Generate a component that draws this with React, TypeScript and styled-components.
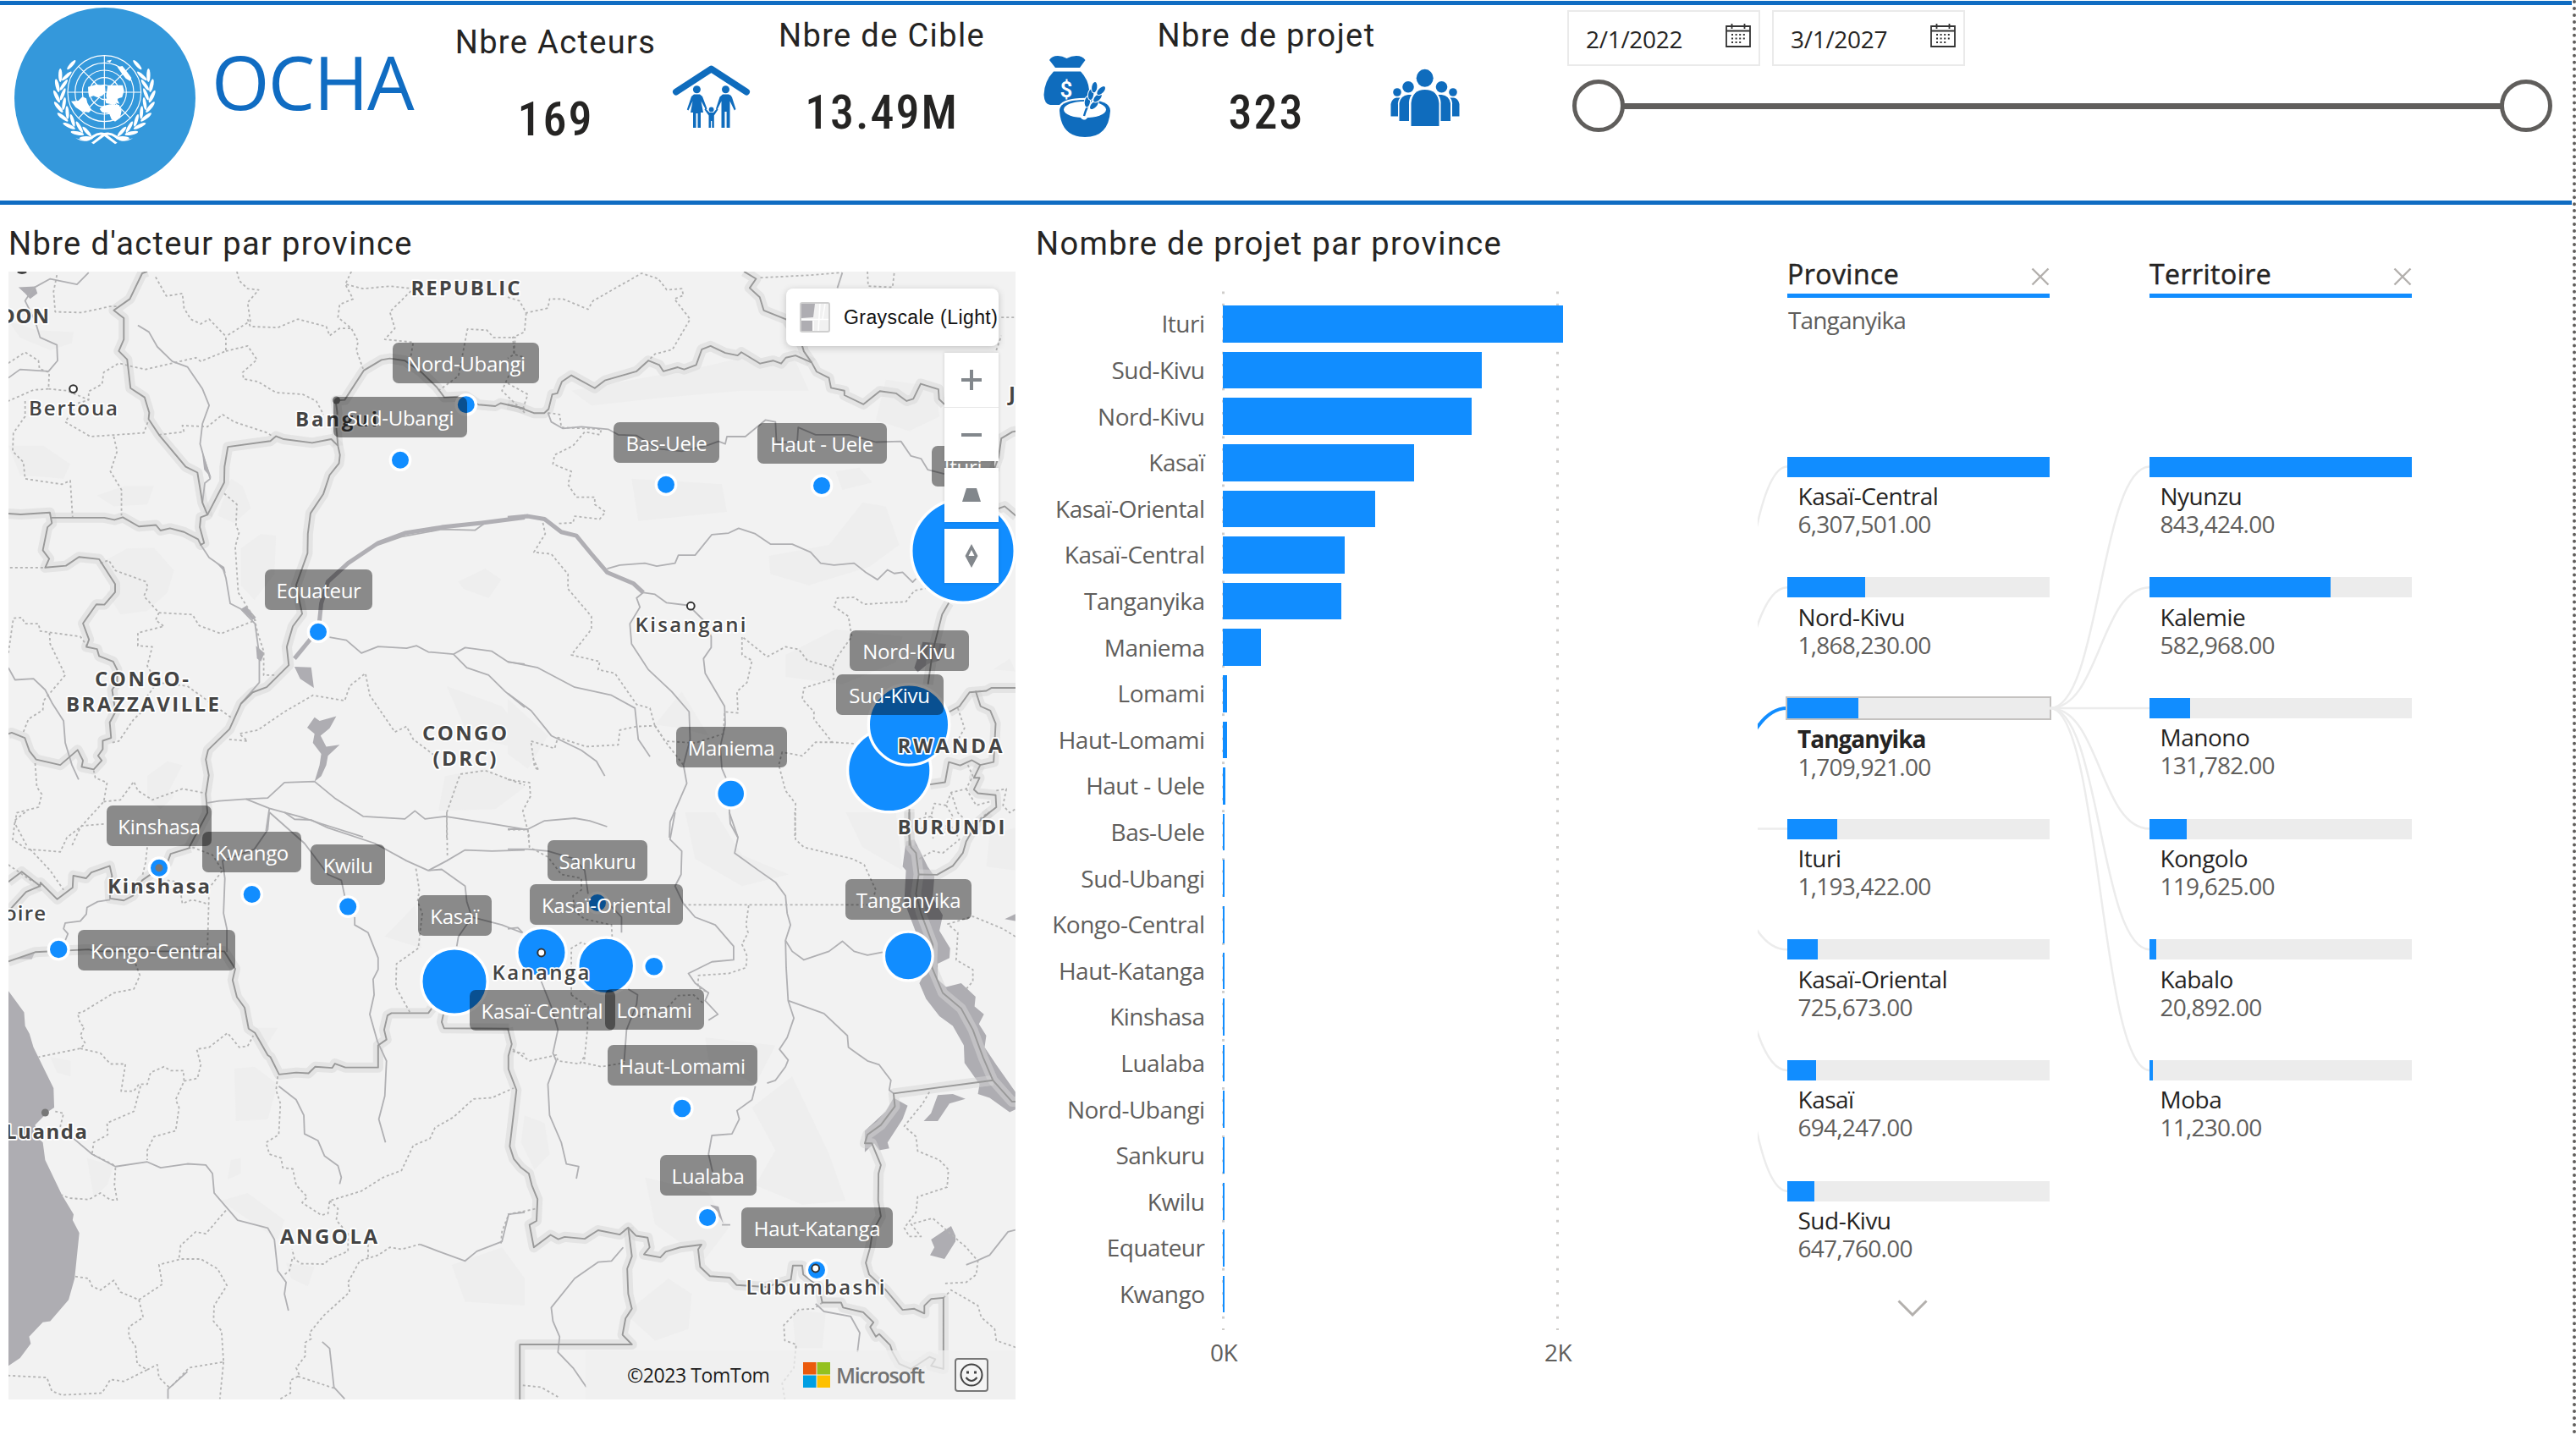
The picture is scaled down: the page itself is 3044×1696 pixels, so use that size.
import React from "react";
import styled, { createGlobalStyle, css } from "styled-components";

const BLUE = "#118dff";
const BRAND = "#0f6cbd";
const INK = "#252423";
const MUTED = "#605e5c";
const SEGOE = `"Open Sans", "Noto Sans", sans-serif`;
const DIN = `Roboto, "Open Sans", sans-serif`;

const GlobalStyle = createGlobalStyle`
  html, body { margin: 0; padding: 0; background: #fff; }
  * { box-sizing: border-box; }
`;

const Page = styled.div`
  display: flex;
  width: 3044px;
  height: 1696px;
  overflow: hidden;
  background: #fff;
  color: ${INK};
  font-family: ${SEGOE};
`;

const Report = styled.div`
  display: flex;
  flex: none;
  flex-direction: column;
  width: 3040px;
`;

const PageGuide = styled.div`
  flex: none;
  width: 4px;
  height: 1696px;
  border-left: 4px dotted ${MUTED};
`;

/* ---------- header ---------- */

const Header = styled.header`
  display: flex;
  align-items: flex-start;
  width: 3039px;
  height: 241px;
  margin-top: 1px;
  border-top: 5px solid #106cc2;
  border-bottom: 5px solid #106cc2;
`;

const Brand = styled.div`
  display: flex;
  align-items: flex-start;
  width: 520px;
  padding: 3px 0 0 17px;
`;

const Logo = styled.svg`
  display: block;
  width: 214px;
  height: 214px;
`;

const BrandName = styled.h1`
  margin: 43px 0 0 19px;
  color: #106cc2;
  font-size: 88px;
  font-weight: 400;
  letter-spacing: -1.6px;
  line-height: 88px;
`;

const Kpi = styled.div<{ $width: number; $top: number; $left?: number }>`
  display: flex;
  flex-direction: column;
  align-items: center;
  width: ${(p) => p.$width}px;
  margin-left: ${(p) => p.$left ?? 0}px;
  padding: ${(p) => p.$top}px 0 0 2px;
  font-family: ${DIN};
`;

const dinTitle = css`
  font-family: ${DIN};
  font-size: 38px;
  font-stretch: 88%;
  font-weight: 450;
  letter-spacing: 0.036em;
  line-height: 38px;
  white-space: nowrap;
`;

const KpiTitle = styled.div`
  ${dinTitle}
`;

const KpiValue = styled.div`
  margin-top: 44px;
  font-size: 56px;
  font-stretch: 79%;
  font-weight: 480;
  letter-spacing: 0.035em;
  line-height: 56px;
`;

const KpiIcon = styled.svg<{ $width: number; $left?: number }>`
  display: block;
  width: ${(p) => p.$width}px;
  height: 110px;
  margin: 54px 0 0 ${(p) => p.$left ?? 0}px;
`;

const Slicer = styled.div`
  display: flex;
  flex-direction: column;
  margin-left: 125px;
  padding-top: 6px;
`;

const Dates = styled.div`
  display: flex;
  gap: 14px;
`;

const DateField = styled.div`
  display: flex;
  justify-content: space-between;
  width: 228px;
  height: 66px;
  padding: 0 9px 0 20px;
  border: 2px solid #eaeaea;
  font-size: 28px;
  letter-spacing: -0.3px;
  line-height: 65px;
`;

const CalendarIcon = styled.svg`
  width: 30px;
  height: 28px;
  margin-top: 14px;
`;

const Range = styled.div`
  display: flex;
  align-items: center;
  width: 1158px;
  margin: 16px 0 0 6px;
`;

const Handle = styled.div`
  width: 62px;
  height: 62px;
  border: 5px solid ${MUTED};
  border-radius: 50%;
`;

const Track = styled.div`
  flex: 1;
  height: 7px;
  margin: 0 -1px;
  background: ${MUTED};
`;

/* ---------- body ---------- */

const Body = styled.main`
  display: flex;
  align-items: flex-start;
  height: 1454px;
`;

const MapPanel = styled.section`
  width: 1200px;
  padding: 27px 0 0 10px;
`;

const PanelTitle = styled.h2<{ $indent?: number }>`
  ${dinTitle}
  margin: 0;
  padding-left: ${(p) => p.$indent ?? 0}px;
`;

const MapCanvas = styled.div`
  position: relative;
  width: 1190px;
  height: 1333px;
  margin-top: 14px;
  overflow: hidden;
  background: #f2f2f2;
`;

const MapDrawing = styled.svg`
  display: block;
  width: 1190px;
  height: 1333px;
`;

const MapLabel = styled.div<{ $x: number; $y: number; $w: number }>`
  position: absolute;
  left: ${(p) => p.$x - 10}px;
  top: ${(p) => p.$y - 321}px;
  width: ${(p) => p.$w}px;
  height: 48px;
  border-radius: 7px;
  background: rgba(0, 0, 0, 0.43);
  color: #fff;
  font-size: 24px;
  letter-spacing: -0.3px;
  line-height: 49px;
  text-align: center;
  white-space: nowrap;
`;

const StylePicker = styled.div`
  position: absolute;
  top: 20px;
  right: 20px;
  display: flex;
  align-items: center;
  gap: 16px;
  width: 251px;
  height: 68px;
  padding-left: 16px;
  border-radius: 8px;
  background: #fff;
  box-shadow: 0 2px 8px rgba(0, 0, 0, 0.2);
  color: #111;
  font-family: "Liberation Sans", Arial, sans-serif;
  font-size: 23px;
  letter-spacing: 0.42px;
  white-space: nowrap;
`;

const StyleThumb = styled.svg`
  flex: none;
  width: 36px;
  height: 36px;
`;

const MapButtons = styled.div`
  position: absolute;
  top: 96px;
  right: 20px;
  display: flex;
  flex-direction: column;
  gap: 8px;
`;

const ButtonStack = styled.div`
  display: flex;
  flex-direction: column;
  background: #fff;
  box-shadow: 0 0 4px rgba(0, 0, 0, 0.16);
`;

const MapButton = styled.button`
  display: block;
  width: 64px;
  height: 64px;
  padding: 0;
  border: 0;
  background: none;

  & + & {
    border-top: 1px solid #e8e8e8;
  }

  svg {
    display: block;
    width: 64px;
    height: 64px;
  }
`;

const Attribution = styled.footer`
  position: absolute;
  right: 0;
  bottom: 0;
  display: flex;
  align-items: center;
  width: 508px;
  height: 58px;
  padding: 0 32px 0 49px;
  background: rgba(238, 238, 238, 0.72);
`;

const Copyright = styled.span`
  width: 208px;
  color: #1c1c1c;
  font-size: 23px;
  letter-spacing: -0.4px;
`;

const WindowsMark = styled.svg`
  width: 32px;
  height: 32px;
  margin-right: 7px;
`;

const Vendor = styled.span`
  flex: 1;
  color: #737373;
  font-size: 25px;
  font-weight: 600;
  letter-spacing: -1.2px;
  line-height: 32px;
`;

const Feedback = styled.svg`
  width: 40px;
  height: 40px;
`;

/* ---------- bar chart ---------- */

const ChartPanel = styled.section`
  width: 877px;
  padding-top: 27px;
`;

const dots = `linear-gradient(#cfcdcb 3px, transparent 3px)`;

const Plot = styled.div`
  height: 1228px;
  margin-top: 37px;
  padding-top: 11.7px;
  background: ${dots} 244px 0.5px / 3px 14.25px repeat-y, ${dots} 639px 0.5px / 3px 14.25px repeat-y;
`;

const BarRow = styled.div`
  display: grid;
  grid-template-columns: 223.5px auto;
  column-gap: 21px;
  align-items: center;
  height: 54.6px;
`;

const BarLabel = styled.div`
  color: ${MUTED};
  font-size: 28px;
  letter-spacing: -0.5px;
  line-height: 43px;
  text-align: right;
  white-space: nowrap;
`;

const Bar = styled.div`
  height: 43.6px;
  background: ${BLUE};
`;

const Axis = styled.div`
  display: flex;
  gap: 335px;
  padding: 12px 0 0 216px;
  color: ${MUTED};
  font-size: 28px;
  letter-spacing: -0.6px;
  line-height: 28px;
`;

const Tick = styled.div`
  width: 60px;
  text-align: center;
`;

/* ---------- decomposition tree ---------- */

const TreePanel = styled.section`
  display: flex;
  width: 780px;
  padding-top: 61px;
`;

const Links = styled.svg<{ $width: number }>`
  flex: none;
  width: ${(p) => p.$width}px;
  height: 1393px;
`;

const TreeColumn = styled.div`
  width: 309.5px;
`;

const TreeHead = styled.div`
  display: flex;
  align-items: center;
  justify-content: space-between;
  height: 49px;
  border-bottom: 5px solid ${BLUE};
  font-size: 32px;
  letter-spacing: 0.45px;
  line-height: 38px;
  -webkit-text-stroke: 0.5px ${INK};
`;

const TreeTitle = styled.span`
  margin-top: -2px;
`;

const CloseIcon = styled.svg`
  width: 22px;
  height: 22px;
  margin-top: 3px;
`;

const TreePath = styled.div`
  height: 187.5px;
  padding: 11px 0 0 1px;
  color: ${MUTED};
  font-size: 28px;
  letter-spacing: -0.85px;
  line-height: 30px;
`;

const Node = styled.div`
  height: 142.7px;
`;

const NodeTrack = styled.div<{ $selected?: boolean }>`
  height: 24px;
  background: #ececec;
  outline: ${(p) => (p.$selected ? "2px solid #c4c2c0" : "none")};
`;

const NodeFill = styled.div`
  height: 24px;
  background: ${BLUE};
`;

const NodeName = styled.div<{ $selected?: boolean }>`
  margin-top: ${(p) => (p.$selected ? 8 : 6.5)}px;
  padding-left: ${(p) => (p.$selected ? 12 : 12.5)}px;
  font-size: 28px;
  font-weight: ${(p) => (p.$selected ? 700 : 400)};
  letter-spacing: ${(p) => (p.$selected ? -1 : -0.5)}px;
  line-height: 33px;
`;

const NodeValue = styled.div`
  padding-left: 12.5px;
  color: ${MUTED};
  font-size: 28px;
  letter-spacing: -0.75px;
  line-height: 33px;
`;

const MoreIcon = styled.svg`
  display: block;
  width: 36px;
  height: 20px;
  margin: -2px 0 0 130px;
`;

/* ---------- data ---------- */

const projects: [string, number][] = [
  ["Ituri", 402.6], ["Sud-Kivu", 306.2], ["Nord-Kivu", 294.2], ["Kasaï", 226.6],
  ["Kasaï-Oriental", 180.6], ["Kasaï-Central", 144.6], ["Tanganyika", 140.6], ["Maniema", 45.2],
  ["Lomami", 5.6], ["Haut-Lomami", 5.6], ["Haut - Uele", 3], ["Bas-Uele", 2.7],
  ["Sud-Ubangi", 2.5], ["Kongo-Central", 2.5], ["Haut-Katanga", 2.5], ["Kinshasa", 2.5],
  ["Lualaba", 2.5], ["Nord-Ubangi", 2.5], ["Sankuru", 2.5], ["Kwilu", 2.5],
  ["Equateur", 2.5], ["Kwango", 2.5],
];

const provinces: [string, number][] = [
  ["Kasaï-Central", 6307501], ["Nord-Kivu", 1868230], ["Tanganyika", 1709921], ["Ituri", 1193422],
  ["Kasaï-Oriental", 725673], ["Kasaï", 694247], ["Sud-Kivu", 647760],
];

const territories: [string, number][] = [
  ["Nyunzu", 843424], ["Kalemie", 582968], ["Manono", 131782],
  ["Kongolo", 119625], ["Kabalo", 20892], ["Moba", 11230],
];

const bubbles: [number, number, number][] = [
  [550.8, 478.3, 10], [473, 543.7, 10], [376, 746.7, 10], [787, 572.8, 10], [971, 574, 10],
  [1138, 651, 59.5], [1050.8, 910.6, 47.5], [1074, 856.4, 46], [863.7, 938, 15.3],
  [188, 1025.7, 10], [297.7, 1057, 10], [411.2, 1071.6, 10], [537, 1160, 37.5],
  [640, 1125.7, 27.5], [706, 1067, 10], [716.2, 1141.4, 31.7], [772.8, 1142.3, 10.3],
  [1073.3, 1130, 27.2], [806, 1310, 10.3], [836, 1439, 10], [965, 1501, 10], [69.2, 1122, 10.2],
];

const labels: [string, number, number, number][] = [
  ["Nord-Ubangi", 464, 404.5, 173], ["Sud-Ubangi", 394, 469, 158], ["Equateur", 313, 672.5, 127],
  ["Bas-Uele", 725, 498.5, 125], ["Haut - Uele", 894.5, 499.5, 153], ["Ituri", 1101, 527, 74],
  ["Nord-Kivu", 1003.5, 745, 141], ["Sud-Kivu", 987.5, 797, 127], ["Maniema", 798.5, 858.5, 131],
  ["Kinshasa", 126, 952, 124], ["Kwango", 239, 983, 117], ["Kwilu", 367, 998, 88],
  ["Kasaï", 493.5, 1058, 87], ["Kongo-Central", 91.5, 1098.5, 186.5], ["Kasaï-Central", 554.5, 1170, 172],
  ["Lomami", 714.5, 1169, 117], ["Sankuru", 647, 993, 118], ["Kasaï-Oriental", 626, 1044.5, 181],
  ["Tanganyika", 999, 1038.5, 149], ["Haut-Lomami", 717.5, 1235, 177], ["Lualaba", 779.5, 1364.5, 114],
  ["Haut-Katanga", 876, 1426.5, 179],
];

/* name, left, vertical centre, width, weight */
const places: [string, number, number, number, number][] = [
  ["REPUBLIC", 487.5, 339.5, 129, 700], ["DON", 2, 373, 58, 700], ["CONGO-", 114, 802, 111, 700],
  ["BRAZZAVILLE", 80, 831.5, 181, 700], ["CONGO", 501, 866, 100, 700], ["(DRC)", 513.5, 896, 75, 700],
  ["RWANDA", 1062.5, 881, 124, 700], ["BURUNDI", 1062.5, 976.5, 127, 700], ["ANGOLA", 333, 1460.5, 115, 700],
  ["Bertoua", 36, 482, 105, 600], ["Bangui", 351, 495, 97, 700], ["Kisangani", 752.5, 738, 131, 600],
  ["Kinshasa", 129, 1047, 121, 700], ["oire", 7, 1078.5, 49, 600], ["Luanda", 8, 1337, 97, 700],
  ["Kananga", 583.5, 1148.5, 115, 600], ["Lubumbashi", 883.5, 1521, 164, 600], ["J", 1194, 465, 12, 700],
];

type Tile = {
  at: string;
  land: string[];
  water: string[];
  borders: string[];
  regions: string[];
  rivers: string[];
  wide: string[];
};

const tiles: Tile[] = [
  {
    at: "translate(0 310) scale(0.39542 0.43367)",
    land: [
      "25,160 110,185 220,190 215,220 150,240 60,205", "25,500 130,500 210,550 190,590 60,580",
      "300,820 380,780 460,778 520,840 500,900 440,950 360,960 320,900 345,880",
      "440,1400 500,1360 545,1370 505,1440 520,1455 480,1490 440,1460",
      "1335,1155 1500,1210 1568,1290 1568,1330 1400,1290", "1330,1400 1450,1380 1568,1430 1480,1490 1310,1495",
      "290,635 370,610 460,610 440,660 340,665", "1370,870 1450,835 1498,865 1460,915 1385,890",
      "720,780 780,740 825,745 820,850 760,920 720,880", "690,590 725,610 750,670 700,710 650,690 670,640",
    ],
    water: [
      "55,68 105,66 112,85 90,100 75,85", "880,1102 930,1104 938,1160 897,1135",
      "918,1268 940,1240 955,1250 1005,1237 985,1270 958,1290 975,1320 1015,1315 980,1345 975,1370 960,1400 940,1415 955,1370 960,1340 935,1310 940,1285",
      "645,818 670,830 675,848", "765,1045 790,1065 780,1088 768,1080", "603,510 614,540 632,588 610,565",
      "720,945 735,937 765,968 755,975",
    ],
    borders: [
      "440,25 425,30 388,100 340,131 370,152 370,210 355,242 380,265 390,343 432,368 446,410 444,427 475,470 555,557 590,573 605,655 620,688 600,695 597,722 610,765 600,770 592,755 550,735 508,725 480,731 466,716 415,720 367,695 342,702 312,696 152,696",
      "25,685 62,687 149,682 155,711 142,722 128,785 147,808 135,832 197,827 236,803 296,809 344,877 344,899 312,933 288,932 248,984 266,1028 258,1048 290,1054 296,1073 338,1088 350,1110 350,1145 335,1165 345,1225 328,1254 332,1296 307,1304 307,1327 293,1345 304,1358 280,1382 244,1375 248,1358 232,1329 180,1370 108,1355 88,1332 74,1296 35,1282 25,1285",
      "620,688 670,600 671,557 681,503 808,487 825,474 848,482 933,492 990,482 1010,500 1016,525 1013,548 985,580 966,632 928,684 920,740 919,793 885,880 903,958 875,992 857,1048 863,1098 797,1158 755,1172 720,1203 686,1272 622,1329 615,1355 624,1398 615,1450 620,1500 565,1595",
      "1010,500 1005,450 1008,410 1003,377 1030,375 1087,295 1140,266 1165,262 1210,268 1260,300 1305,340 1328,368 1393,365 1430,388 1480,392 1496,384 1568,399",
    ],
    regions: [
      "170,35 160,80 165,135 245,137 330,120 355,120", "465,40 497,92 545,85 550,125 570,155 600,168 625,155 675,202 675,242 600,270 585,260 435,292 385,282 355,275 310,300 305,332 265,352 265,375 230,385 195,435 270,475 430,465 443,432",
      "708,25 715,50 740,72 773,75 740,110 748,160 675,202", "740,155 748,175 830,178 890,155 975,175 985,200 1015,180 1050,180",
      "1050,25 1032,60 1055,100 1015,115 1010,150 1050,180 1070,215 1065,240 1085,290",
      "675,242 740,228 768,265 725,300 728,318 770,325 825,355 905,360 945,378 967,415",
      "475,470 550,462 545,445 620,448 665,415 700,435 800,465 815,475", "1035,60 1085,72 1165,65 1235,72 1165,135 1180,180 1150,210 1235,218 1225,270",
      "1310,350 1370,310 1397,182 1455,185 1475,205 1540,205 1535,250 1568,260", "25,275 75,245 115,268 118,290 147,300 145,345 100,348 25,378",
      "145,345 200,350 265,375", "75,378 75,420 40,465 38,515 70,545 75,590 185,605 210,595 217,695", "340,475 350,515 330,570 363,620 363,690",
      "670,630 708,660 705,720 715,735 703,775 712,900 760,970 770,1010 788,1060 788,1125 820,1125", "30,832 135,832",
      "300,820 325,812 345,840 435,870 442,885 430,910 475,955 575,960 595,990 660,1012 765,975", "475,955 465,975 490,992 412,1010 412,1045 455,1048 440,1100 470,1145 560,1155 690,1240",
      "470,1145 430,1195 430,1220 400,1245 355,1305 330,1310", "25,1065 40,970 65,968 75,985 115,985 120,1005 240,1020 260,1045",
      "148,1010 150,1040 195,1125 130,1195 128,1220 85,1245 70,1280", "685,1300 740,1305 715,1285 770,1275 850,1225 935,1180 1030,1195 1045,1155 1092,1120 1105,1180 1180,1280 1215,1265 1235,1300 1300,1345",
      "105,1365 110,1430 125,1450 115,1485 50,1500 45,1530 80,1590", "280,1385 285,1405 320,1418 310,1470 240,1540 215,1590",
      "310,1470 360,1465 400,1415 412,1440 455,1465 545,1435 615,1447", "1335,1568 1335,1500 1375,1395 1450,1385 1568,1425", "1568,410 1500,350 1520,310 1568,290",
    ],
    rivers: [
      "412,172 445,190 470,230 515,270 560,285 605,345 625,390 605,440 598,495 612,540 628,590 612,602 605,655",
      "600,770 625,805 665,830 675,860 688,930 720,945 762,985 775,1070 775,1145 720,1203",
      "620,1473 655,1468 735,1463 800,1460 850,1418 940,1415 1000,1460 1085,1510 1210,1517 1240,1495 1270,1517 1330,1510 1470,1530 1568,1545",
      "985,1022 1035,1030 1080,1065 1130,1047 1215,1052 1245,1045 1280,1062 1355,1068 1390,1050 1470,1060 1520,1090 1568,1095",
      "1355,1068 1395,1105 1460,1125 1510,1170 1568,1213", "735,1463 805,1488 900,1512 960,1530 1085,1566", "805,1488 795,1550",
      "25,315 60,292 145,297 172,268 170,225 120,205 105,160 75,105 100,70 150,45 230,60 265,28",
      "25,1105 45,1138 100,1135 135,1165 155,1200 190,1250 195,1310 215,1370 235,1410", "1100,780 1200,748 1320,728 1420,730 1450,710",
    ],
    wide: ["1568,695 1440,710 1320,722 1210,738 1130,765 1040,820 980,870 960,930 952,1000 880,1080"],
  },
  {
    at: "translate(600 310) scale(0.39542 0.43367)",
    land: [
      "190,350 560,290 700,260 860,270 900,350 700,350 450,370 250,390", "370,590 640,605 655,680 390,705",
      "780,800 960,770 1060,655 1130,665 1170,770 1080,830 900,880 785,850", "830,1070 980,1000 1180,1020 1160,1090 1000,1150 830,1130",
      "0,1190 120,1290 60,1380 0,1340", "440,1260 520,1170 600,1290 520,1270", "1100,430 1130,320 1280,340 1290,420 1200,460",
      "980,570 1050,560 1090,600 1000,620", "1450,1110 1500,1080 1517,1115",
    ],
    water: ["1215,1105 1240,1035 1310,1040 1290,1085 1255,1095 1225,1117"],
    borders: [
      "0,388 30,394 78,411 109,411 122,400 133,360 148,357 162,325 190,308 260,343 290,322 385,297 420,268 453,280 465,297 508,286 527,292 563,280 580,237 606,228 650,247 687,254 698,245 754,276 793,268 817,276 831,260 860,254 908,273 923,298 960,315 966,342 1006,350 1006,362 1063,387 1112,351 1160,357 1192,378 1212,372 1234,331 1287,346 1289,373 1305,387",
      "706,25 742,45 723,70 753,95 765,131 833,156 880,228 885,243 908,273", "1440,600 1467,530 1475,480 1508,462 1520,460", "1440,680 1485,665 1520,692",
      "1318,928 1298,960 1270,1060 1256,1150", "1320,1225 1350,1210 1380,1172 1430,1168 1445,1160 1520,1160",
      "1398,1168 1413,1210 1442,1222 1458,1257 1452,1362 1412,1370 1387,1357 1352,1371 1318,1362 1307,1417 1262,1423",
      "1412,1370 1393,1405 1410,1405 1393,1437 1405,1447 1458,1452 1460,1485 1425,1510", "1200,1490 1200,1590",
    ],
    regions: [
      "0,95 35,105 55,138 120,125 125,100 165,100 240,128 255,105 400,30 450,45 475,75 520,72 525,90 498,100 545,155 492,238 440,250 420,268",
      "55,138 50,190 15,205 20,250 0,262", "0,330 60,360 45,400", "755,42 905,35 998,28", "1075,25 1077,65 1150,68 1155,28", "1475,150 1520,150", "1460,240 1475,200",
      "120,410 155,415 160,450 280,455 275,470 230,462 195,500 140,525 135,550 190,570 180,605 205,640 260,640 260,660 292,680 275,700 200,692 195,710 150,712",
      "105,710 112,740 78,790 130,795 180,850 180,890 250,965 250,1000 190,1070 275,1088 270,1110 320,1120 385,1205 425,1215 440,1265",
      "0,1410 65,1418 68,1455 45,1495 65,1568", "70,1310 80,1375 92,1385 75,1350", "70,1305 140,1325 150,1295 235,1320 330,1315 335,1275 385,1265 440,1263",
      "440,1263 470,1305 560,1310 645,1285 648,1225 688,1228 685,1170 715,1145 730,1085 700,1070 700,1020 775,1075 830,1048 870,1055 895,1085 970,1105 985,1075 1028,1020 1018,965 975,938 985,915 1035,913 1065,932 1190,925 1215,895 1250,888",
      "440,1263 470,1305 525,1370", "970,1105 975,1135 885,1160 880,1190 915,1225 915,1245 970,1308 1040,1312", "970,1308 920,1308 880,1345 820,1335 810,1370 830,1440 860,1475 858,1568",
      "1345,1215 1365,1270 1340,1310", "1375,1370 1390,1400 1370,1435 1325,1445 1310,1480 1275,1475 1265,1510 1215,1520", "1325,1445 1345,1500 1385,1535 1435,1500",
      "1460,1440 1490,1435 1480,1480 1500,1500 1517,1490", "1310,1480 1330,1510 1300,1560", "1265,1510 1290,1540 1270,1570", "1370,1435 1400,1480 1440,1470",
    ],
    rivers: [
      "405,900 440,905 475,928 540,935 590,980 608,1020 608,1050 585,1080 590,1120 648,1210 650,1260 635,1320 640,1380 652,1405",
      "297,835 335,825 410,820 445,828 500,820 510,798 560,798 610,742 660,738 690,725 740,740 785,768 850,768 905,790 935,820 975,825 1035,820 1070,845 1105,865 1135,838 1155,848 1180,845 1210,872 1220,862",
      "405,900 385,915 395,940 365,985 370,1040 420,1110 490,1170 542,1225 545,1300 525,1370 535,1420 485,1525 483,1568", "662,1490 665,1530 688,1568",
      "120,410 130,435 165,453 220,448 300,455 330,470 385,472 450,508 520,515 600,498 630,488 650,495 655,475 710,475 770,430 800,435 803,490 865,490 868,450 920,470 1020,470 1100,490 1175,488 1205,528 1235,535 1255,565 1305,577",
      "0,1088 90,1105 200,1158 310,1180 380,1215 390,1300 425,1347", "0,1175 70,1222 130,1290 220,1330 265,1360 290,1400", "0,1545 60,1545 110,1522 200,1515 245,1522 297,1538", "1000,28 985,70",
    ],
    wide: ["0,697 60,692 110,700 160,735 205,745 250,795 297,845 375,875 405,900"],
  },
  {
    at: "translate(0 960) scale(0.39542 0.45914)",
    land: [
      "700,660 760,655 830,700 800,790 705,795", "1350,1165 1500,1120 1568,1200 1568,1270 1390,1260", "260,890 340,910 320,960 280,990",
      "660,1000 740,980 850,1050 830,1100", "1150,320 1240,240 1260,350", "855,1160 940,1170 920,1220 870,1200", "760,555 830,555 790,610", "690,895 720,890 720,930 680,945", "150,630 210,640 210,680 170,670",
    ],
    water: [
      "25,460 72,515 75,550 88,570 100,605 160,710 162,760 145,770 105,805 110,835 128,850 135,895 185,985 220,1035 217,1050 237,1083 223,1200 205,1255 150,1310 128,1313 87,1350 92,1368 60,1405 25,1425",
      "50,378 105,360 95,378",
    ],
    borders: [
      "569,91 510,107 500,130 425,175 397,215 370,227 329,222 327,180 335,165 328,138 273,155 257,170 219,163 217,194 171,224 121,181 120,190 65,153 25,179", "120,190 78,205 25,255",
      "25,384 105,360 265,353 290,358 670,358 703,403 695,432 708,476 731,503 743,557 762,568 800,625 808,630 834,675 885,670 922,672 942,655 993,658 1001,647 1032,657 1130,657 1130,600 1155,585 1148,560 1158,523 1170,517 1280,517 1290,505",
      "1325,520 1320,540 1327,556 1521,557",
    ],
    regions: [
      "75,0 45,20 38,70 80,95 180,102 200,65 245,35 310,30", "440,90 435,130 425,165", "25,135 100,180", "90,95 150,150 190,200",
      "575,90 635,110 665,150 625,195 620,350", "500,175 535,180 545,235 575,225 625,237", "405,390 418,420 400,455 340,465 245,515 232,517 240,545 252,552 240,575 255,595 240,608 115,630",
      "240,608 300,620 330,648 375,648 362,718 400,718 415,700 440,700 450,670 490,655 510,665 548,665 550,692 525,740 535,760 525,820 460,835 440,870 440,895",
      "420,705 400,770 320,800 322,830 280,850 275,880 345,910", "550,692 590,685 600,650 588,610 625,605 680,568 715,605 740,602 757,575",
      "830,680 825,715 838,750 833,830 795,850 805,880 840,890 845,915 875,918 885,960 918,990 903,1005 960,1037 980,1033 985,1000 1080,975 1145,940 1200,922 1235,858 1285,840 1300,812 1355,785 1415,738 1470,735 1535,710",
      "985,1000 1010,1020 1005,1050 1040,1085 1040,1130 985,1150 968,1163 900,1162 880,1150 873,1125", "873,1150 865,1180 850,1190", "345,915 342,960 350,998 330,998 300,980 265,997 205,993 185,985",
      "675,1025 615,1085 585,1080 540,1115 535,1148", "225,1195 265,1200 275,1220 300,1230 340,1205 360,1235 415,1255 485,1215 475,1165 540,1150 600,1150 650,1175 678,1218 640,1270 638,1310 662,1335 668,1415 565,1430 510,1480",
      "415,1255 428,1300 385,1325 385,1350 405,1375 410,1420 440,1435 370,1465 330,1460 305,1495 185,1500 155,1490 140,1455 25,1450", "440,1435 470,1422 475,1455 505,1480", "668,1415 657,1510",
      "838,1510 868,1495 868,1462 895,1450 885,1430 912,1400 912,1365 930,1355 925,1340 968,1295 1045,1235 1040,1210 1075,1155 1130,1140 1165,1120 1200,1125 1255,1112", "890,1452 1000,1483", "1100,1145 1100,1110",
      "1497,1110 1500,1080 1520,1035 1568,1028", "1243,145 1253,200 1248,230 1262,260 1250,350 1185,390 1183,450 1225,515", "165,770 190,775 180,810", "1335,0 1337,115", "1532,615 1568,622",
    ],
    rivers: [
      "329,225 292,230 260,245 258,262 240,280 195,285 190,300 203,313 195,330", "220,840 275,880 345,912 440,900 480,915 560,905 615,908 635,930 640,980 710,1050 800,1070 820,1100 830,1180 855,1210 850,1240 862,1283",
      "805,0 800,45 760,95 665,125 672,170 668,260 678,300 678,360", "833,705 885,740 908,780 910,828 950,845 970,885 1010,910 1020,940 1015,957", "805,0 910,80 980,160 1020,175 1030,215",
      "1060,270 1060,290 1100,310 1130,375 1130,405 1115,430 1118,470 1105,520 1128,590 1155,640 1150,730 1132,790 1152,850",
      "1280,150 1335,125 1390,97 1470,100 1568,97", "1280,150 1320,147 1390,190 1395,230 1410,270 1370,320 1365,345",
      "1410,270 1500,290 1530,300 1560,310", "1255,1112 1310,1130 1390,1155 1425,1130 1500,1105 1520,1035 1568,1030", "963,1363 985,1380 998,1480 1030,1510", "502,1510 502,1485 560,1440",
      "850,0 880,18 930,20 980,40 1120,80 1215,125 1280,150",
    ],
    wide: [],
  },
  {
    at: "translate(600 960) scale(0.39542 0.45914)",
    land: [
      "850,680 960,880 1010,1000 880,1010 740,960 800,870 730,760", "410,940 600,980 660,1070 590,1150 520,1110 440,1060", "850,1280 950,1290 940,1380 860,1380",
      "530,0 620,0 700,110 840,160 700,190 560,120", "1010,0 1160,0 1180,150 1060,90", "590,580 800,600 740,700 600,640", "50,780 110,800 125,880 80,920 40,850", "1440,60 1517,40 1517,150 1430,140", "350,1290 480,1200 550,1240 540,1330 440,1360",
    ],
    water: [
      "1190,75 1215,70 1255,140 1275,165 1270,220 1300,265 1290,305 1322,350 1320,375 1285,390 1285,430 1310,450 1355,440 1398,475 1395,500 1423,520 1408,545 1430,575 1425,605 1460,650 1517,720 1517,765 1500,772 1440,735 1405,725 1410,700 1365,645 1363,600 1330,550 1290,525 1250,480 1230,440 1262,390 1262,350 1220,310 1185,230 1190,150 1180,140",
      "1153,735 1195,755 1180,790 1135,850 1140,865 1110,870 1095,852 1067,875 1067,820 1130,770", "1285,728 1330,725 1368,738 1320,750 1285,795 1243,795 1265,775",
      "1265,1100 1325,1065 1338,1090 1338,1105 1305,1150 1262,1140 1275,1120", "605,1010 630,1015 645,1060 635,1045", "1485,275 1517,262 1517,280",
    ],
    borders: [
      "0,556 12,597 2,627 2,661 26,715 6,860 18,892 40,915 63,930 72,960 89,996 86,1052 65,1062 78,1120 128,1088 151,1099 170,1093 230,1098 270,1076 335,1087 360,1069 383,1090 418,1095 424,1120 407,1138 456,1146 472,1131 515,1120 579,1113 569,1125 575,1170 604,1194 664,1198 684,1217 770,1222 846,1203 852,1167 880,1167 883,1190 930,1222 940,1262 996,1262 1002,1275 1062,1287 1093,1313 1083,1325 1100,1350 1110,1343 1143,1372 1150,1390 1170,1420 1205,1433 1260,1402 1278,1408 1265,1425 1302,1433 1302,1250 1265,1253 1245,1270 1245,1290 1215,1278 1180,1281 1130,1230 1080,1190 1070,1160 1083,1120 1090,1080 1115,1040 1107,1000 1108,930 1115,908 1088,852 1067,852 1075,830 1115,805 1157,757 1153,724 1450,690",
      "1200,0 1200,60 1205,90 1220,105 1228,160 1220,210 1235,260 1270,340 1268,400 1300,465 1355,505 1390,560 1420,630 1450,690 1507,745 1520,745", "1228,160 1283,161 1330,138 1360,105 1370,75 1400,30 1440,0",
      "360,1069 371,1143 357,1175 360,1240 371,1278 352,1303 343,1345 371,1370 36,1370 36,1520",
    ],
    regions: [
      "0,45 60,45 65,90 120,115 160,160 220,170 220,200 195,215 200,255 230,275 310,290 312,320", "190,470 190,350 220,335 245,345", "190,470 240,500 238,560 228,645 280,655 350,645", "15,610 65,640 145,625 150,640 215,648 228,630",
      "390,525 480,500 510,472 555,470 585,492", "525,238 1085,238 1100,200 1065,135 1030,120 885,90 860,70 858,0", "720,240 712,290 718,310 700,340 715,370 712,400 660,415 570,420 568,450 600,465",
      "1517,320 1480,300 1390,268 1315,288 1345,310 1340,380 1390,405 1390,435 1365,460", "1260,720 1240,750 1185,808 1220,835 1225,872 1290,895 1317,920 1313,965 1225,990 1220,1030 1185,1070 1200,1092 1235,1092 1205,1060 1270,1045 1310,1075 1370,1120 1405,1155 1400,1190 1370,1210 1302,1213",
      "1302,1250 1325,1230 1405,1270 1415,1300 1455,1330 1460,1360 1520,1378", "0,1035 60,1025 86,1020", "940,1262 915,1278 870,1280 825,1320 828,1360 862,1370 855,1430 820,1470 828,1511",
      "1250,0 1240,40 1230,60", "1230,120 1270,100 1300,105 1350,70 1330,40 1290,30", "45,1475 100,1480 150,1505",
    ],
    rivers: [
      "500,0 485,70 520,100 518,160 500,190 525,235 560,270 620,290 675,345 675,380 610,385 540,415 560,440 600,465 590,485 628,520 600,535",
      "662,0 688,65 678,105 750,150 800,180 830,215 835,260 845,290 830,330 832,400 838,485 855,530 835,580 812,610 838,638 830,655 800,690 775,697", "740,705 730,740 685,768 692,790 670,828 610,832 600,880 612,925",
      "838,485 945,518 1015,575 1018,605 1075,640 1110,650 1145,690 1140,715 1153,724", "830,330 850,358 885,380 960,358 1000,332 1035,358 1075,368 1120,360", "0,95 60,95 120,100 200,120 230,150 240,210", "290,225 340,270 340,310",
      "100,435 130,500 150,560 135,620 145,640 120,700 125,780 160,850 175,905 212,912 205,943", "345,1120 310,1155 270,1158 200,1200 130,1275 135,1310 155,1350 150,1390 195,1430 235,1480",
      "920,1265 945,1285 1025,1298 1052,1340 1045,1390", "1517,1075 1495,1080 1440,1140 1400,1155 1370,1165", "0,300 30,297 45,310", "360,455 388,470 385,495 355,560 348,640", "640,1062 665,1062",
    ],
    wide: [],
  },
];

/* ---------- drawings ---------- */

const Lines = ({ items, ...rest }: { items: string[] } & React.SVGProps<SVGPolylineElement>) => (
  <>
    {items.map((points, i) => (
      <polyline key={i} points={points} fill="none" strokeLinejoin="round" vectorEffect="non-scaling-stroke" {...rest} />
    ))}
  </>
);

const Areas = ({ items, fill }: { items: string[]; fill: string }) => (
  <>
    {items.map((points, i) => (
      <polygon key={i} points={points} fill={fill} />
    ))}
  </>
);

const layers: ((t: Tile) => React.ReactNode)[] = [
  (t) => <Areas items={t.land} fill="#eeeeee" />,
  (t) => <Areas items={t.water} fill="#aeadb2" />,
  (t) => <Lines items={t.borders} stroke="rgba(214,214,214,0.5)" strokeWidth={12} />,
  (t) => <Lines items={t.regions} stroke="#b4b4b4" strokeWidth={1.8} strokeDasharray="3 3" />,
  (t) => <Lines items={t.rivers} stroke="#b0b0b3" strokeWidth={1.8} />,
  (t) => <Lines items={t.wide} stroke="#b0afb4" strokeWidth={5} />,
  (t) => <Lines items={t.borders} stroke="#999" strokeWidth={1.9} />,
];

const cities: [number, number][] = [[86.6, 459.6], [816.3, 716.2], [639.7, 1126], [963.7, 1499]];

const BaseMap = () => (
  <MapDrawing viewBox="10 321 1190 1333">
    {layers.map((layer, i) => (
      <g key={i}>
        {tiles.map((t) => (
          <g key={t.at} transform={t.at}>{layer(t)}</g>
        ))}
      </g>
    ))}
    <path d="M21 321q5 3 10 0" fill="none" stroke="#444" strokeWidth="3" />
    <circle cx="397.5" cy="473" r="4.5" fill="#777" />
    <circle cx="53.4" cy="1315" r="4.5" fill="#777" />
    {bubbles.map(([x, y, r]) => (
      <circle key={`${x}-${y}`} cx={x} cy={y} r={r + 1.7} fill={BLUE} stroke="#fff" strokeWidth="3.4" />
    ))}
    <circle cx="188" cy="1025.7" r="4.5" fill="#777" />
    {cities.map(([x, y]) => (
      <circle key={x} cx={x} cy={y} r="4.4" fill="#fff" stroke="#333" strokeWidth="2" />
    ))}
    <g fontFamily={SEGOE} fontSize="24" fill="#444" stroke="#fff" strokeWidth="3.6" strokeLinejoin="round" paintOrder="stroke">
      {places.map(([name, x, y, w, weight]) => (
        <text key={name + x} x={x - 2} y={y + 9} textLength={w} fontWeight={weight}>{name}</text>
      ))}
    </g>
  </MapDrawing>
);

const leafAngles = [112, 124, 137, 150, 163, 176, 189, 202];

const Wreath = () => (
  <g>
    {leafAngles.map((a, i) => {
      const rad = (a * Math.PI) / 180;
      const out = 172 - i * 0.5;
      const inn = 150 - i * 0.5;
      return (
        <g key={a}>
          <ellipse rx="24" ry="6.5" transform={`translate(${220 + out * Math.cos(rad)} ${180 + out * Math.sin(rad)}) rotate(${a + 90 - 22})`} />
          <ellipse rx="23" ry="6" transform={`translate(${220 + inn * Math.cos(rad + 0.04)} ${180 + inn * Math.sin(rad + 0.04)}) rotate(${a + 90 + 26})`} />
        </g>
      );
    })}
    <ellipse rx="22" ry="6" transform="translate(103 80) rotate(-48)" />
    <path d="M118 340Q150 352 178 330Q200 314 222 322L266 356L258 361L216 330Q200 324 182 338Q152 362 118 340Z" />
  </g>
);

const UnLogo = () => (
  <Logo viewBox="17 9 214 214">
    <circle cx="124" cy="116" r="107" fill="#3498db" />
    <g transform="translate(50 50) scale(0.33333)">
      <g fill="none" stroke="#fff" strokeWidth="3.4">
        {[130, 104, 78, 52, 26].map((r) => (
          <circle key={r} cx="220" cy="177" r={r} />
        ))}
        <path d="M220 47V307M90 177H350M128 85L202 159M238 195L312 269M312 85L238 159M128 269L202 195" />
      </g>
      <g fill="#fff">
        <path d="M203 236L215 226 240 220 272 222 281 242 276 268 258 281 245 272 237 252 212 248Z" />
        <path d="M102 209L128 207 142 193 156 199 160 215 174 239 165 249 138 244 118 230Z" />
        <path d="M162 158L190 150 222 152 224 178 212 190 196 196 182 190 166 194 163 178Z" />
        <path d="M232 152L285 152 290 172 283 195 264 200 274 218 252 212 232 214 226 190Z" />
        <path d="M266 88L284 84 300 104 316 126 312 138 296 128 280 108Z" />
        <path d="M226 66L246 62 240 72ZM222 200L262 206 258 222 226 216Z" />
        <Wreath />
        <g transform="translate(440 0) scale(-1 1)">
          <Wreath />
        </g>
      </g>
    </g>
  </Logo>
);

const FamilyIcon = () => (
  <KpiIcon $width={100} viewBox="791 60 100 110" fill={BRAND}>
    <path d="M799 108.5L840.5 81.5L882 108.5" fill="none" stroke={BRAND} strokeWidth="8" strokeLinecap="round" strokeLinejoin="round" />
    <circle cx="823.4" cy="105.7" r="4.5" />
    <path d="M820 111.5H827L830 114L835.500 128.500L834 129.500L828.500 119.500L831 133H828V151H824.500V134H822.500V151H819V133H816L818.500 119.500L813.500 130.500L811.800 129.500L817 114Z" />
    <circle cx="857.5" cy="105.7" r="4.5" />
    <path d="M854 111.5H861Q864 112 865 115L869.500 129L867.800 130.500L862.500 119.500V151H858.600V132H856.400V151H852.500V119.500L847.500 129.500L846 128.500L850.500 114.500Z" />
    <circle cx="840.6" cy="129.4" r="2.9" />
    <path d="M833.500 128L838.300 133H843L847.500 128L848.500 129.500L843.800 136.500V151H841.300V143H840V151H837.500V136.500L832.500 129.500Z" />
  </KpiIcon>
);

const AidIcon = () => (
  <KpiIcon $width={86} $left={39} viewBox="1230 60 86 110" fill={BRAND}>
    <path d="M1240 71Q1243 66 1250 66Q1255 66 1260.5 69Q1266 66 1272 66Q1279 66 1282.5 71L1276 80H1247Z" />
    <path d="M1245 84.5H1277Q1286 94 1287 106L1283 124H1241Q1234 123 1233.5 112Q1234 96 1245 84.500Z" />
    <path d="M1252 131Q1252 118 1282 118Q1312 118 1312 131Q1310 162 1282 162Q1254 162 1252 131Z" stroke="#fff" strokeWidth="4.500" paintOrder="stroke" />
    <ellipse cx="1282" cy="129.5" rx="25" ry="9.800" fill="#fff" />
    <path d="M1281 137Q1284 126 1290 117Q1296 106 1301 97" stroke="#fff" strokeWidth="9" strokeLinecap="round" fill="none" />
    <path d="M1281 137Q1284 126 1290 117" stroke={BRAND} strokeWidth="2.400" fill="none" />
    <g transform="translate(1288 124) rotate(26)" stroke="#fff" strokeWidth="2" paintOrder="stroke">
      {[0, -9.500, -19].map((y) => (
        <g key={y} transform={`translate(0 ${y})`}>
          <ellipse cx="-4.400" cy="-2" rx="3.100" ry="6.200" transform="rotate(-18 -4.400 -2)" />
          <ellipse cx="4.400" cy="-2" rx="3.100" ry="6.200" transform="rotate(18 4.400 -2)" />
        </g>
      ))}
    </g>
    <text x="1260" y="115" fill="#fff" fontFamily="Roboto, sans-serif" fontSize="26" fontWeight="600" textAnchor="middle">$</text>
  </KpiIcon>
);

const PeopleIcon = () => (
  <KpiIcon $width={86} viewBox="1641 60 86 110" fill={BRAND}>
    <ellipse cx="1683.7" cy="92.3" rx="10" ry="10.500" />
    <path d="M1667.5 149V122Q1669 106 1683.7 106Q1699 106 1700.5 122V149Z" />
    <circle cx="1664" cy="102.7" r="6.800" />
    <circle cx="1703.5" cy="102.7" r="6.800" />
    <path d="M1653.5 143V122Q1655 113 1664 112L1668 112Q1664.5 117 1665 124V143Z" />
    <path d="M1714 143V122Q1712.5 113 1703.5 112L1699.5 112Q1703 117 1702.5 124V143Z" />
    <circle cx="1651" cy="109" r="4.800" />
    <circle cx="1717" cy="109" r="4.800" />
    <path d="M1643.5 137.5V123Q1645 116 1650 115.5H1654.5Q1651.5 119 1652 124V137.500Z" />
    <path d="M1724.5 137.5V123Q1723 116 1718 115.5H1713.5Q1716.5 119 1716 124V137.500Z" />
  </KpiIcon>
);

const Calendar = () => (
  <CalendarIcon viewBox="0 0 30 28" fill="none" stroke="#333" strokeWidth="1.8">
    <path d="M1 3H29V27H1ZM1 8.5H29M7.5 0V6M22.5 0V6" />
    <path d="M7 13H25M7 17.5H25M7 22H20" strokeWidth="2.2" strokeDasharray="2 2.6" />
  </CalendarIcon>
);

const Close = () => (
  <CloseIcon viewBox="0 0 22 22" stroke="#b3b0ad" strokeWidth="2.4">
    <path d="M1.5 1.5L20.5 20.5M20.5 1.5L1.5 20.5" />
  </CloseIcon>
);

/* ---------- sections ---------- */

const fmt = (n: number) => n.toLocaleString("en-US", { minimumFractionDigits: 2 });

const link = (x0: number, y0: number, x1: number, y1: number) => {
  const m = (x0 + x1) / 2;
  return `M${x0} ${y0}C${m} ${y0} ${m} ${y1} ${x1} ${y1}`;
};

const nodeY = (i: number) => 551.5 + i * 142.7;

const TreeLevel = ({ title, path, items, selected }: { title: string; path?: string; items: [string, number][]; selected?: string }) => (
  <TreeColumn>
    <TreeHead>
      <TreeTitle>{title}</TreeTitle>
      <Close />
    </TreeHead>
    <TreePath>{path}</TreePath>
    {items.map(([name, value]) => (
      <Node key={name}>
        <NodeTrack $selected={name === selected}>
          <NodeFill style={{ width: `${(value / items[0][1]) * 100}%` }} />
        </NodeTrack>
        <NodeName $selected={name === selected}>{name}</NodeName>
        <NodeValue>{fmt(value)}</NodeValue>
      </Node>
    ))}
    {selected && (
      <MoreIcon viewBox="0 0 36 20" fill="none" stroke="#b3b0ad" strokeWidth="3">
        <path d="M1.5 1.5L18 18L34.5 1.5" />
      </MoreIcon>
    )}
  </TreeColumn>
);

export default function App() {
  return (
    <Page>
      <GlobalStyle />
      <Report>
        <Header>
          <Brand>
            <UnLogo />
            <BrandName>OCHA</BrandName>
          </Brand>
          <Kpi $width={271} $top={25}>
            <KpiTitle>Nbre Acteurs</KpiTitle>
            <KpiValue>169</KpiValue>
          </Kpi>
          <FamilyIcon />
          <Kpi $width={300} $top={17}>
            <KpiTitle>Nbre de Cible</KpiTitle>
            <KpiValue>13.49M</KpiValue>
          </Kpi>
          <AidIcon />
          <Kpi $width={291} $top={17} $left={34}>
            <KpiTitle>Nbre de projet</KpiTitle>
            <KpiValue>323</KpiValue>
          </Kpi>
          <PeopleIcon />
          <Slicer>
            <Dates>
              <DateField>
                2/1/2022
                <Calendar />
              </DateField>
              <DateField>
                3/1/2027
                <Calendar />
              </DateField>
            </Dates>
            <Range>
              <Handle />
              <Track />
              <Handle />
            </Range>
          </Slicer>
        </Header>

        <Body>
          <MapPanel>
            <PanelTitle>Nbre d'acteur par province</PanelTitle>
            <MapCanvas>
              <BaseMap />
              {labels.map(([name, x, y, w]) => (
                <MapLabel key={name} $x={x} $y={y} $w={w}>{name}</MapLabel>
              ))}
              <StylePicker>
                <StyleThumb viewBox="0 0 36 36">
                  <rect x="1" y="1" width="34" height="34" rx="2" fill="#f1f1f1" stroke="#cfcfcf" strokeWidth="2" />
                  <path d="M2 2H18L16 18L2 19ZM2 22H15V34H2Z" fill="#aeadb2" />
                  <path d="M2 20.5H34M16 22V34M24 2L22 34M30 2L27 20" stroke="#fff" strokeWidth="1.5" />
                </StyleThumb>
                Grayscale (Light)
              </StylePicker>
              <MapButtons>
                <ButtonStack>
                  <MapButton aria-label="Zoom in">
                    <svg viewBox="0 0 64 64" stroke="#82878c" strokeWidth="4"><path d="M20 32H44M32 20V44" /></svg>
                  </MapButton>
                  <MapButton aria-label="Zoom out">
                    <svg viewBox="0 0 64 64" stroke="#82878c" strokeWidth="4"><path d="M20 32H44" /></svg>
                  </MapButton>
                </ButtonStack>
                <ButtonStack>
                  <MapButton aria-label="Pitch">
                    <svg viewBox="0 0 64 64"><path d="M26 24H38L43 40H21Z" fill="#82878c" /></svg>
                  </MapButton>
                </ButtonStack>
                <ButtonStack>
                  <MapButton aria-label="Rotate">
                    <svg viewBox="0 0 64 64"><path fillRule="evenodd" d="M32 18L39.5 32L32 46L24.5 32ZM32 25L28.5 32H35.500Z" fill="#82878c" /></svg>
                  </MapButton>
                </ButtonStack>
              </MapButtons>
              <Attribution>
                <Copyright>©2023 TomTom</Copyright>
                <WindowsMark viewBox="0 0 32 32">
                  <path d="M0 1H15.5V15.5H0Z" fill="#eb5a0c" />
                  <path d="M16.5 1H32V15.5H16.500Z" fill="#94c11f" />
                  <path d="M0 16.5H15.5V31H0Z" fill="#009fe3" />
                  <path d="M16.5 16.5H32V31H16.500Z" fill="#fec000" />
                </WindowsMark>
                <Vendor>Microsoft</Vendor>
                <Feedback viewBox="0 0 40 40" fill="none" stroke="#444" strokeWidth="2">
                  <rect x="1" y="1" width="38" height="38" rx="3" fill="#f4f4f4" stroke="#777" />
                  <circle cx="20" cy="20" r="12.5" />
                  <path d="M13.5 23Q20 31 26.5 23" />
                  <path d="M14 17H17M23 17H26" strokeWidth="3" />
                </Feedback>
              </Attribution>
            </MapCanvas>
          </MapPanel>

          <ChartPanel>
            <PanelTitle $indent={24}>Nombre de projet par province</PanelTitle>
            <Plot>
              {projects.map(([name, width]) => (
                <BarRow key={name}>
                  <BarLabel>{name}</BarLabel>
                  <Bar style={{ width }} />
                </BarRow>
              ))}
            </Plot>
            <Axis>
              <Tick>0K</Tick>
              <Tick>2K</Tick>
            </Axis>
          </ChartPanel>

          <TreePanel>
            <Links $width={35} viewBox="2077 303 35 1393" fill="none" stroke="#ececec" strokeWidth="2.5">
              {provinces.map(([name], i) =>
                i === 2 ? null : <path key={name} d={link(1993.5, 979.6, 2112, nodeY(i))} />
              )}
              <path d={link(1993.5, 979.6, 2112, nodeY(2))} stroke={BLUE} strokeWidth="4" />
            </Links>
            <TreeLevel title="Province" path="Tanganyika" items={provinces} selected="Tanganyika" />
            <Links $width={118.5} viewBox="2421.5 303 118.5 1393" fill="none" stroke="#ececec" strokeWidth="2.5">
              {territories.map(([name], i) => (
                <path key={name} d={link(2422, nodeY(2), 2540, nodeY(i))} />
              ))}
            </Links>
            <TreeLevel title="Territoire" items={territories} />
          </TreePanel>
        </Body>
      </Report>
      <PageGuide />
    </Page>
  );
}
